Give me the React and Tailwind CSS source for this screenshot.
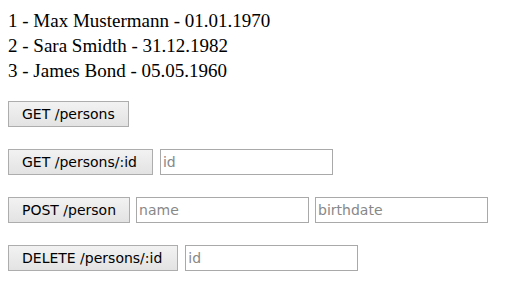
import React, { useState } from "react";

const persons = [
  { id: 1, name: "Max Mustermann", birthdate: "01.01.1970" },
  { id: 2, name: "Sara Smidth", birthdate: "31.12.1982" },
  { id: 3, name: "James Bond", birthdate: "05.05.1960" },
];

const btn =
  "h-[26px] px-[13px] border border-[#adadad] bg-gradient-to-b from-[#f2f2f2] to-[#e3e3e3] text-[14px] text-black font-['DejaVu_Sans',sans-serif] leading-none";
const input =
  "h-[26px] w-[173px] px-[2px] border border-[#a9a9a9] bg-white text-[14px] font-['DejaVu_Sans',sans-serif] placeholder:text-[#888] outline-none";

export default function App() {
  const [id, setId] = useState("");
  const [name, setName] = useState("");
  const [birthdate, setBirthdate] = useState("");
  const [delId, setDelId] = useState("");

  return (
    <div className="bg-white min-h-screen p-2 font-['Liberation_Serif',serif] text-black">
      {/* person list */}
      <div className="text-[19px] leading-[25px]">
        {persons.map((p) => (
          <div key={p.id}>
            {p.id} - {p.name} - {p.birthdate}
          </div>
        ))}
      </div>

      {/* api actions */}
      <div className="flex flex-col gap-[22px] mt-[18px]">
        <div className="flex gap-[7px]">
          <button className={btn}>GET /persons</button>
        </div>
        <div className="flex gap-[7px]">
          <button className={btn + " pr-[15px]"}>GET /persons/:id</button>
          <input className={input} placeholder="id" value={id} onChange={(e) => setId(e.target.value)} />
        </div>
        <div className="flex gap-[6px]">
          <button className={btn}>POST /person</button>
          <input className={input} placeholder="name" value={name} onChange={(e) => setName(e.target.value)} />
          <input className={input} placeholder="birthdate" value={birthdate} onChange={(e) => setBirthdate(e.target.value)} />
        </div>
        <div className="flex gap-[7px]">
          <button className={btn + " pr-[15px]"}>DELETE /persons/:id</button>
          <input className={input} placeholder="id" value={delId} onChange={(e) => setDelId(e.target.value)} />
        </div>
      </div>
    </div>
  );
}
